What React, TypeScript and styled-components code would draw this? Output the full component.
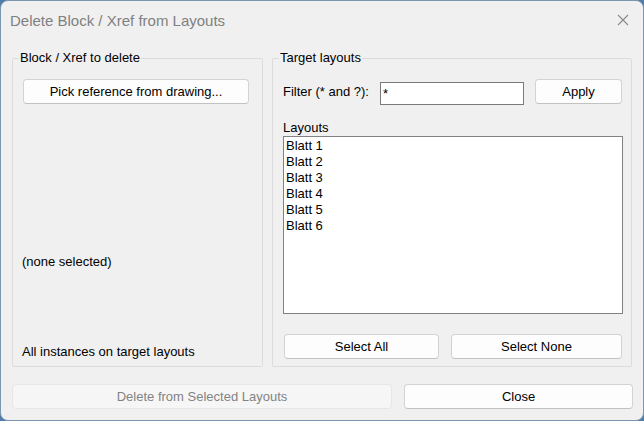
import styled, { createGlobalStyle } from 'styled-components';

const GlobalStyle = createGlobalStyle`
  html, body {
    margin: 0;
    padding: 0;
    background: #4f7dab;
  }
  body {
    font-family: "Liberation Sans", Arial, sans-serif;
    font-size: 13px;
    color: #000;
  }
`;

const Window = styled.div`
  box-sizing: border-box;
  width: 644px;
  height: 421px;
  background: #f0f0f0;
  border: 1px solid #7d96b0;
  border-radius: 8px;
  overflow: hidden;
  display: flex;
  flex-direction: column;
`;

const TitleBar = styled.div`
  height: 39px;
  display: flex;
  align-items: center;
  justify-content: space-between;
  padding: 0 14px 0 9px;
  flex-shrink: 0;
`;

const Title = styled.span`
  font-size: 15px;
  color: #808080;
`;

const CloseIcon = styled.svg`
  width: 12px;
  height: 12px;
  margin-top: -2px;
`;

const Main = styled.div`
  display: grid;
  grid-template-columns: 251px 360px;
  column-gap: 9px;
  padding: 10px 11px 0 11px;
`;

const Group = styled.fieldset<{ $right: number }>`
  box-sizing: border-box;
  margin: 0;
  height: 317px;
  border: 1px solid #dcdcdc;
  border-radius: 2px;
  padding: 13px ${(p) => p.$right}px 0 10px;
  display: flex;
  flex-direction: column;
  min-width: 0;
`;

const Legend = styled.legend`
  padding: 0 1px;
  margin-left: -4px;
  line-height: 16px;
`;

const Button = styled.button<{ $width: number }>`
  box-sizing: border-box;
  width: ${(p) => p.$width}px;
  height: 25px;
  padding: 0;
  font: inherit;
  color: #000;
  background: #fdfdfd;
  border: 1px solid #d3d3d3;
  border-bottom-color: #c2c2c2;
  border-radius: 4px;
  flex-shrink: 0;

  &:disabled {
    color: #838383;
    background: #f6f6f6;
    border-color: #e6e6e6;
  }
`;

const Note = styled.div<{ $gap: number }>`
  line-height: 16px;
  margin-top: ${(p) => p.$gap}px;
  margin-left: -1px;
`;

const FilterRow = styled.div`
  display: flex;
  align-items: center;
  height: 25px;
`;

const FilterLabel = styled.span`
  width: 97px;
`;

const FilterInput = styled.input`
  box-sizing: border-box;
  width: 144px;
  height: 23px;
  margin-top: 3px;
  padding: 0 2px;
  font: inherit;
  border: 1px solid #7a7a7a;
  background: #fff;
  outline: none;
`;

const ApplySlot = styled.div`
  margin-left: auto;
`;

const ListLabel = styled.div`
  line-height: 16px;
  margin-top: 16px;
`;

const List = styled.ul`
  box-sizing: border-box;
  list-style: none;
  margin: 0;
  width: 340px;
  height: 178px;
  padding: 1px 2px;
  background: #fff;
  border: 1px solid #828282;
`;

const ListItem = styled.li`
  line-height: 16px;
`;

const ButtonRow = styled.div`
  display: flex;
  justify-content: space-between;
  margin-top: 20px;
  padding-left: 1px;
`;

const Footer = styled.div`
  display: flex;
  justify-content: space-between;
  padding: 17px 10px 0 11px;
`;

const layouts = ['Blatt 1', 'Blatt 2', 'Blatt 3', 'Blatt 4', 'Blatt 5', 'Blatt 6'];

export default function App() {
  return (
    <>
      <GlobalStyle />
      <Window>
        <TitleBar>
          <Title>Delete Block / Xref from Layouts</Title>
          <CloseIcon viewBox="0 0 12 12">
            <path d="M1 1 L11 11 M11 1 L1 11" stroke="#8a8a8a" strokeWidth="1.1" fill="none" />
          </CloseIcon>
        </TitleBar>
        <Main>
          <Group $right={12}>
            <Legend>Block / Xref to delete</Legend>
            <Button $width={226}>Pick reference from drawing...</Button>
            <Note $gap={150}>(none selected)</Note>
            <Note $gap={74}>All instances on target layouts</Note>
          </Group>
          <Group $right={9}>
            <Legend>Target layouts</Legend>
            <FilterRow>
              <FilterLabel>Filter (* and ?):</FilterLabel>
              <FilterInput defaultValue="*" />
              <ApplySlot>
                <Button $width={87}>Apply</Button>
              </ApplySlot>
            </FilterRow>
            <ListLabel>Layouts</ListLabel>
            <List>
              {layouts.map((name) => (
                <ListItem key={name}>{name}</ListItem>
              ))}
            </List>
            <ButtonRow>
              <Button $width={155}>Select All</Button>
              <Button $width={171}>Select None</Button>
            </ButtonRow>
          </Group>
        </Main>
        <Footer>
          <Button $width={380} disabled>
            Delete from Selected Layouts
          </Button>
          <Button $width={229}>Close</Button>
        </Footer>
      </Window>
    </>
  );
}
